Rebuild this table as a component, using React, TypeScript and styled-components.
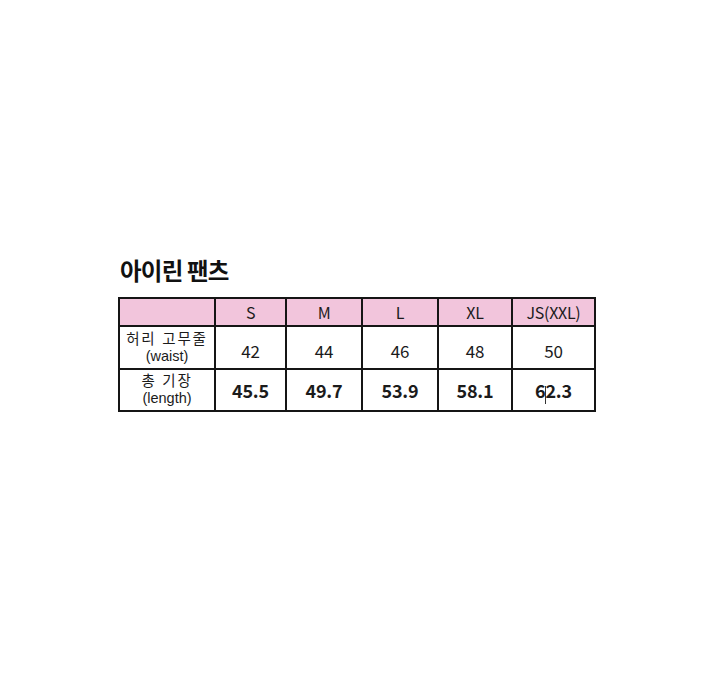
import React from "react";
import styled, { createGlobalStyle } from "styled-components";

const GlobalStyle = createGlobalStyle`
  html, body {
    margin: 0;
    padding: 0;
    background: #ffffff;
  }
  body {
    font-family: "Noto Sans CJK KR", "Noto Sans", sans-serif;
    color: #1b1b1b;
  }
`;

const sizes = ["S", "M", "L", "XL", "JS(XXL)"];
const colWidths = [96, 71, 76, 76, 74, 83];

const rows = [
  { ko: "허리 고무줄", en: "(waist)", values: ["42", "44", "46", "48", "50"], bold: false },
  { ko: "총 기장", en: "(length)", values: ["45.5", "49.7", "53.9", "58.1", "62.3"], bold: true },
];

const Page = styled.div`
  width: 720px;
  height: 695px;
  padding: 256px 0 0 118px;
  box-sizing: border-box;
  display: flex;
  flex-direction: column;
`;

const Title = styled.h2`
  margin: 0 0 13px 2px;
  font-size: 23.5px;
  font-weight: 700;
  letter-spacing: -0.8px;
  line-height: 28px;
  color: #111;
`;

const Table = styled.table`
  border-collapse: collapse;
  table-layout: fixed;
  width: 476px;
  border: 2px solid #151515;
`;

const HeadCell = styled.th`
  background: #f2c5dc;
  border: 2px solid #151515;
  height: 26px;
  padding: 0;
  font-size: 16px;
  font-weight: 400;
  text-align: center;
  letter-spacing: -0.3px;
`;

const LabelCell = styled.td<{ tall: boolean }>`
  border: 2px solid #151515;
  height: ${(p) => (p.tall ? "41px" : "40px")};
  padding: 0;
  text-align: center;
  font-family: "Liberation Sans", "Noto Sans CJK KR", sans-serif;
  font-size: 14.5px;
  line-height: 17px;
`;

const ValueCell = styled.td<{ bold: boolean }>`
  border: 2px solid #151515;
  padding: ${(p) => (p.bold ? "0" : "5px 0 0")};
  text-align: center;
  font-size: ${(p) => (p.bold ? "18px" : "17px")};
  font-weight: ${(p) => (p.bold ? 600 : 400)};
  letter-spacing: -0.2px;
`;

const Ko = styled.div`
  letter-spacing: 1.8px;
`;

const En = styled.div`
  letter-spacing: 0;
`;

const Mark = styled.span`
  display: inline-block;
  width: 1px;
  height: 18px;
  margin: 0 -1px 0 0;
  background: #333;
  vertical-align: -6px;
`;

const renderValue = (v: string) => {
  if (v !== "62.3") return v;
  return (
    <>
      6
      <Mark />
      2.3
    </>
  );
};

export default function App() {
  return (
    <>
      <GlobalStyle />
      <Page>
        <Title>아이린 팬츠</Title>
        <Table>
          <colgroup>
            {colWidths.map((w, i) => (
              <col key={i} style={{ width: w }} />
            ))}
          </colgroup>
          <thead>
            <tr>
              <HeadCell />
              {sizes.map((s) => (
                <HeadCell key={s}>{s}</HeadCell>
              ))}
            </tr>
          </thead>
          <tbody>
            {rows.map((r, ri) => (
              <tr key={r.ko}>
                <LabelCell tall={ri === 0}>
                  <Ko>{r.ko}</Ko>
                  <En>{r.en}</En>
                </LabelCell>
                {r.values.map((v) => (
                  <ValueCell key={v} bold={r.bold}>
                    {renderValue(v)}
                  </ValueCell>
                ))}
              </tr>
            ))}
          </tbody>
        </Table>
      </Page>
    </>
  );
}
